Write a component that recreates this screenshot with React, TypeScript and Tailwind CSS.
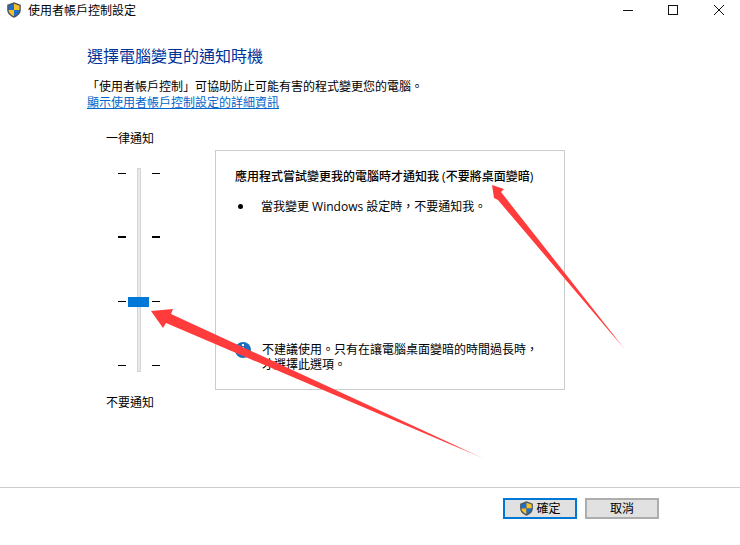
const CJK = "font-['Segoe_UI','Open_Sans','Noto_Sans_CJK_TC',sans-serif]";

function Shield({ size = 16 }: { size?: number }) {
  return (
    <svg width={size} height={size} viewBox="0 0 16 16" className="shrink-0">
      <path d="M8 .3 L14.8 2.8 V8 C14.8 11.5 11.5 14.4 8 15.7 C4.5 14.4 1.2 11.5 1.2 8 V2.8 Z" fill="#4a5560" />
      <path d="M8 1.8 V8 H2.5 V3.7 Z" fill="#1f6fc4" />
      <path d="M8 1.8 L13.5 3.7 V8 H8 Z" fill="#f6c026" />
      <path d="M2.5 8 H8 V14.2 C5.4 13.1 2.7 11 2.5 8 Z" fill="#f6c026" />
      <path d="M13.5 8 H8 V14.2 C10.6 13.1 13.3 11 13.5 8 Z" fill="#1f6fc4" />
    </svg>
  );
}

function TickColumn() {
  return (
    <div className="flex w-2 flex-col">
      <div className="h-px w-2 bg-black" />
      <div className="mt-[62px] h-0.5 w-2 bg-black" />
      <div className="mt-[63px] h-px w-2 bg-black" />
      <div className="mt-[63px] h-px w-2 bg-black" />
    </div>
  );
}

export default function App() {
  return (
    <div className={`relative flex h-[545px] w-[740px] flex-col overflow-hidden bg-white text-xs text-black ${CJK}`}>
      <header className="flex h-5 items-center pl-[6px]">
        <Shield size={16} />
        <span className="mt-0.5 ml-1.5 leading-none">使用者帳戶控制設定</span>
        <svg className="ml-auto" width="120" height="20" viewBox="0 0 120 20" fill="none" stroke="#111" strokeWidth="1">
          <path d="M3 10.5 H13" />
          <rect x="48.5" y="5.5" width="9" height="9" />
          <path d="M94 5 L104 15 M104 5 L94 15" />
        </svg>
      </header>

      <main className="flex flex-1 flex-col pl-[87px]">
        <h1 className="mt-[26px] text-base leading-5 font-normal text-[#003399]">選擇電腦變更的通知時機</h1>
        <p className="mt-[13px] leading-[15px]">「使用者帳戶控制」可協助防止可能有害的程式變更您的電腦。</p>
        <a className="mt-px leading-[15px] text-[#0066cc] underline">顯示使用者帳戶控制設定的詳細資訊</a>

        <div className="mt-[21px] flex">
          <div className="ml-[19px] flex w-[109px] flex-col">
            <span className="leading-[15px]">一律通知</span>
            <div className="relative mt-[22px] ml-3 flex h-[204px] w-[42px] justify-between pt-[5px]">
              <TickColumn />
              <div className="absolute top-0 left-[19px] h-[204px] w-1 border border-[#d6d6d6] bg-[#e7eae8]" />
              <div className="absolute top-[129px] left-[10px] h-2.5 w-[21px] bg-[#0078d7]" />
              <TickColumn />
            </div>
            <span className="mt-[23px] leading-[15px]">不要通知</span>
          </div>

          <section className="mt-[19px] flex h-[240px] w-[350px] flex-col border border-[#cccccc] pt-[18px] pl-[19px]">
            <h2 className="leading-[15px] font-medium">應用程式嘗試變更我的電腦時才通知我 (不要將桌面變暗)</h2>
            <div className="mt-[15px] flex items-center">
              <span className="ml-[3px] h-[5px] w-[5px] rounded-full bg-black" />
              <span className="ml-[18px] leading-[15px]">{"當我變更 Windows 設定時\uFF0C不要通知我。"}</span>
            </div>
            <div className="mt-[128px] flex items-start">
              <span className="flex h-4 w-4 shrink-0 flex-col items-center gap-px rounded-full bg-[#1a6fc0] pt-0.5">
                <span className="h-0.5 w-0.5 bg-white" />
                <span className="h-[6px] w-0.5 bg-white" />
              </span>
              <p className="ml-[11px] w-[285px] leading-[15px]">{"不建議使用。只有在讓電腦桌面變暗的時間過長時\uFF0C才選擇此選項。"}</p>
            </div>
          </section>
        </div>
      </main>

      <footer className="flex h-[58px] justify-end gap-2 border-t border-[#cccccc] pt-2.5 pr-[81px]">
        <button className="flex h-[21px] w-[74px] items-center justify-center gap-0.5 border-2 border-[#0078d7] bg-[#e1e1e1] leading-none">
          <Shield size={15} />
          確定
        </button>
        <button className="h-[21px] w-[74px] border-2 border-[#adadad] bg-[#e1e1e1] leading-none">取消</button>
      </footer>

      <svg className="pointer-events-none absolute inset-0" width="740" height="545" viewBox="0 0 740 545">
        <defs>
          <linearGradient id="a1" gradientUnits="userSpaceOnUse" x1="492" y1="185" x2="627" y2="352">
            <stop offset="0.9" stopColor="#ff3b3b" />
            <stop offset="1" stopColor="#ff3b3b" stopOpacity="0.15" />
          </linearGradient>
          <linearGradient id="a2" gradientUnits="userSpaceOnUse" x1="151" y1="311" x2="487" y2="460">
            <stop offset="0.9" stopColor="#ff3b3b" />
            <stop offset="1" stopColor="#ff3b3b" stopOpacity="0.15" />
          </linearGradient>
        </defs>
        <path d="M492 185 L504 189 L501 192 L627 352 L498 200 L494 198 Z" fill="url(#a1)" />
        <path d="M151 311 L173 309 L171 314 L487 460 L166 323 L163 328 Z" fill="url(#a2)" />
      </svg>
    </div>
  );
}
